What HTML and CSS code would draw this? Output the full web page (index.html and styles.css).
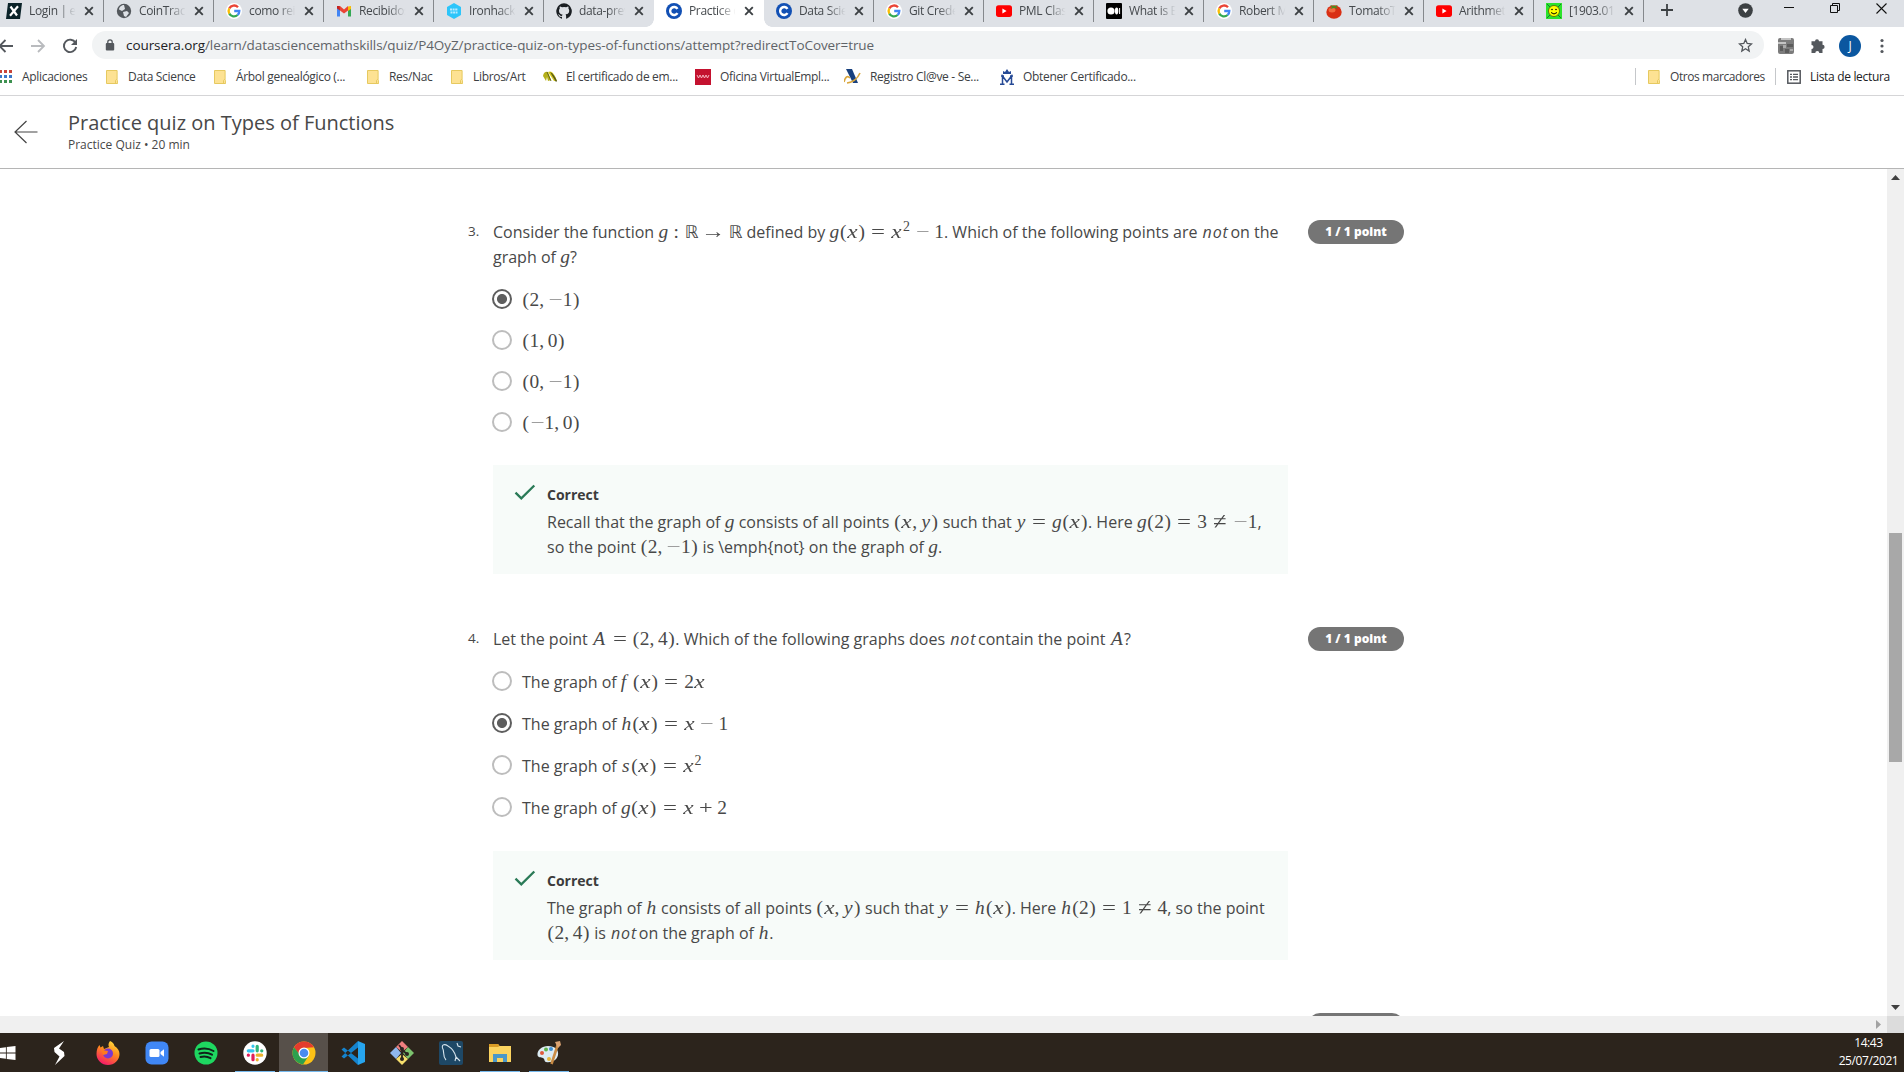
FILE: index.html
```html
<!DOCTYPE html>
<html lang="es">
<head>
<meta charset="utf-8">
<title>Practice quiz on Types of Functions</title>
<link rel="stylesheet" href="styles.css">
</head>
<body>
<svg class="defs" width="0" height="0">
<defs>
<symbol id="google" viewBox="0 0 16 16"><circle cx="8" cy="8" r="8" fill="#fff"/><g fill="none" stroke-width="2.3"><path d="M12 4.2A5.4 5.4 0 0 0 3.3 5.4" stroke="#ea4335"/><path d="M3.3 5.4A5.4 5.4 0 0 0 3.3 10.6" stroke="#fbbc05"/><path d="M3.3 10.6A5.4 5.4 0 0 0 11.6 12" stroke="#34a853"/><path d="M11.6 12A5.4 5.4 0 0 0 13.3 8H8.2" stroke="#4285f4"/></g></symbol>
<symbol id="coursera" viewBox="0 0 16 16"><circle cx="8" cy="8" r="8" fill="#1250b4"/><path d="M11.5 5.8A4 4 0 1 0 11.5 10.2" fill="none" stroke="#fff" stroke-width="2.4"/></symbol>
<symbol id="youtube" viewBox="0 0 16 16"><rect y="2.3" width="16" height="11.6" rx="2.6" fill="#f00"/><path d="M6.4 5.6v5l4.2-2.5z" fill="#fff"/></symbol>
<symbol id="close" viewBox="0 0 10 10"><path d="M1.2 1.2 8.8 8.8M8.8 1.2 1.2 8.8" stroke="#3c4043" stroke-width="1.9"/></symbol>
<symbol id="folder" viewBox="0 0 12 14"><path d="M.5.5h10.6v9l.5 1v3H.5z" fill="#fde293" stroke="#e6c95f"/><path d="M9.5 13.5v-3l1.2-1.3" fill="none" stroke="#e6c95f"/></symbol>
<symbol id="check" viewBox="0 0 22 17"><path d="M1.5 8.7 7.3 14.3 20.3 1.5" fill="none" stroke="#2a7a57" stroke-width="2.3"/></symbol>
</defs>
</svg>

<div class="tabs">
  <div class="tab"><svg class="fav" viewBox="0 0 16 16"><path d="M2 0h14l-2 16H0z" fill="#0b2329"/><path d="M4.5 3.5 11 12.5M12 3.3 4 12.7" stroke="#fff" stroke-width="2.2"/></svg><span class="name">Login | edX</span><svg class="x"><use href="#close"/></svg></div>
  <div class="tab"><svg class="fav" viewBox="0 0 16 16"><circle cx="8" cy="8" r="7.2" fill="#54585d"/><path d="M8 2C5 2 3 4.500 3 6.500l3 1.500 3-2zM7 9l4-1 2 2-3 4-2-1z" fill="#dee1e6"/></svg><span class="name">CoinTracker</span><svg class="x"><use href="#close"/></svg></div>
  <div class="tab"><svg class="fav"><use href="#google"/></svg><span class="name">como reinstalar</span><svg class="x"><use href="#close"/></svg></div>
  <div class="tab"><svg class="fav" viewBox="0 0 16 16"><path d="M1 3v10.500h3V6z" fill="#4285f4"/><path d="M12 6v7.500h3V3z" fill="#34a853"/><path d="M1 3.500 4 3l4 3.500L12 3v4.500L8 10.500 4 7.500z" fill="#ea4335"/><path d="M12 3.500 15 3v3l-3 2z" fill="#fbbc04"/><path d="M1 3h2.500L4 7.500 1 5.500z" fill="#c5221f"/></svg><span class="name">Recibidos (2)</span><svg class="x"><use href="#close"/></svg></div>
  <div class="tab"><svg class="fav" viewBox="0 0 16 16"><path d="M8 0l7 4v8l-7 4-7-4V4z" fill="#2dc5fa"/><path d="M4 6.500h8M4.500 9.500h7" stroke="#b8eaff" stroke-width="1.800" stroke-dasharray="2 .6"/></svg><span class="name">Ironhack Stu</span><svg class="x"><use href="#close"/></svg></div>
  <div class="tab last"><svg class="fav" viewBox="0 0 16 16"><path d="M8 .2a8 8 0 0 0-2.500 15.500c.4.100.5-.2.5-.4v-1.500c-2.200.5-2.700-.9-2.700-.9-.4-.9-.9-1.200-.9-1.200-.7-.5.100-.5.100-.5.800.100 1.200.8 1.200.8.700 1.300 1.900.9 2.400.7.100-.5.3-.9.5-1.100-1.800-.2-3.600-.9-3.600-4 0-.9.300-1.600.8-2.100-.100-.2-.4-1 .1-2.100 0 0 .700-.2 2.200.8a7.600 7.600 0 0 1 4 0c1.500-1 2.200-.8 2.200-.8.400 1.100.2 1.900.1 2.100.5.500.8 1.200.8 2.100 0 3.100-1.900 3.700-3.700 4 .3.300.6.800.6 1.500v2.200c0 .2.100.5.500.4A8 8 0 0 0 8 .2z" fill="#1b1f23"/></svg><span class="name">data-prework</span><svg class="x"><use href="#close"/></svg></div>
  <div class="tab active"><svg class="fav"><use href="#coursera"/></svg><span class="name">Practice quiz</span><svg class="x"><use href="#close"/></svg></div>
  <div class="tab"><svg class="fav"><use href="#coursera"/></svg><span class="name">Data Science</span><svg class="x"><use href="#close"/></svg></div>
  <div class="tab"><svg class="fav"><use href="#google"/></svg><span class="name">Git Credential</span><svg class="x"><use href="#close"/></svg></div>
  <div class="tab"><svg class="fav"><use href="#youtube"/></svg><span class="name">PML Class 1</span><svg class="x"><use href="#close"/></svg></div>
  <div class="tab"><svg class="fav" viewBox="0 0 16 16"><rect width="16" height="16" rx="1" fill="#000"/><circle cx="5" cy="8" r="3.600" fill="#fff"/><ellipse cx="10.600" cy="8" rx="1.700" ry="3.400" fill="#fff"/><path d="M13.600 5v6" stroke="#fff"/></svg><span class="name">What is Bayes</span><svg class="x"><use href="#close"/></svg></div>
  <div class="tab"><svg class="fav"><use href="#google"/></svg><span class="name">Robert Mill</span><svg class="x"><use href="#close"/></svg></div>
  <div class="tab"><svg class="fav" viewBox="0 0 16 16"><ellipse cx="8" cy="9" rx="7.700" ry="6.800" fill="#d92f14"/><ellipse cx="6" cy="7" rx="3.500" ry="2.500" fill="#f2693f"/><path d="M8 0v3l4-1-2 2 2 2-4-1-4 1 2-2-2-2 4 1z" fill="#4f8a1e"/></svg><span class="name">TomatoTimer</span><svg class="x"><use href="#close"/></svg></div>
  <div class="tab"><svg class="fav"><use href="#youtube"/></svg><span class="name">Arithmetic</span><svg class="x"><use href="#close"/></svg></div>
  <div class="tab"><svg class="fav" viewBox="0 0 16 16"><rect width="16" height="16" fill="#2be32b"/><path d="M1 1l14 14M15 1 1 15" stroke="#173" stroke-width="1"/><circle cx="8" cy="8" r="5.500" fill="#ff0" stroke="#550" stroke-width=".8"/><circle cx="6" cy="6.500" r=".8"/><circle cx="10" cy="6.500" r=".8"/><path d="M5 9.500q3 3 6 0" fill="none" stroke="#000"/></svg><span class="name">[1903.01 x</span><svg class="x"><use href="#close"/></svg></div>
  <svg class="plus" viewBox="0 0 12 12"><path d="M6 0v12M0 6h12" stroke="#3c4043" stroke-width="1.800"/></svg>
  <div class="winctl">
    <svg width="15" height="15" viewBox="0 0 15 15"><circle cx="7.500" cy="7.500" r="7.300" fill="#3c4043"/><path d="M4.300 5.700h6.400L7.500 10z" fill="#fff"/></svg>
    <svg width="10" height="10" viewBox="0 0 10 10"><path d="M0 4.500h10" stroke="#111"/></svg>
    <svg width="10" height="10" viewBox="0 0 10 10"><path d="M.5 2.500h7v7h-7zM2.500 2.500v-2h7v7h-2" fill="none" stroke="#111"/></svg>
    <svg width="11" height="11" viewBox="0 0 11 11"><path d="M.5.5l10 10M10.500.5l-10 10" stroke="#111" stroke-width="1.100"/></svg>
  </div>
</div>

<div class="toolbar">
  <svg class="nav" viewBox="0 0 16 16"><path d="M16 8H3M8.500 2 2.500 8l6 6" fill="none" stroke="#54585d" stroke-width="1.800"/></svg>
  <svg class="nav" viewBox="0 0 16 16"><path d="M1 8h13M8 2l6 6-6 6" fill="none" stroke="#b9bbbe" stroke-width="1.800"/></svg>
  <svg class="nav" viewBox="0 0 16 16"><path d="M13.500 4.800A6.200 6.200 0 1 0 14.200 9" fill="none" stroke="#54585d" stroke-width="1.900"/><path d="M15 1v6H9z" fill="#54585d"/></svg>
  <div class="omnibox">
    <svg width="10" height="12" viewBox="0 0 10 12"><rect x=".8" y="4" width="8.400" height="7.500" rx="1" fill="#54585d"/><path d="M2.800 5V3a2.200 2.200 0 0 1 4.400 0v2" fill="none" stroke="#54585d" stroke-width="1.300"/></svg>
    <span class="url"><b>coursera.org</b>/learn/datasciencemathskills/quiz/P4OyZ/practice-quiz-on-types-of-functions/attempt?redirectToCover=true</span>
    <svg width="15" height="15" viewBox="0 0 15 15"><path d="M7.500 1.500l1.700 4 4.300.4-3.200 2.900.9 4.300-3.700-2.300-3.700 2.300.9-4.300L1.500 5.900l4.300-.4z" fill="none" stroke="#54585d" stroke-width="1.300"/></svg>
  </div>
  <svg class="ext" width="16" height="16" viewBox="0 0 16 16"><rect width="16" height="16" rx="2" fill="#7c7c7c"/><path d="M3 0h10v2H3zM0 4h8v2H0z" fill="#c4c4c4"/><path d="M2 8h3v5H2zM9 6h6v3H9zM7 11h4v4H7z" fill="#5c5c5c"/><path d="M5 7h3v3H5zM12 11h3v2h-3z" fill="#aaa"/></svg>
  <svg class="puzzle" width="16" height="16" viewBox="0 0 16 16"><path d="M5 3.200a2 2 0 0 1 4 0h3.500v3.600a2 2 0 0 1 0 4.200V15H9.300a2 2 0 0 0-4 0H1.500v-4a2 2 0 0 0 0-4V3.200z" fill="#54585d"/></svg>
  <span class="avatar">J</span>
  <svg class="dots" width="4" height="16" viewBox="0 0 4 16"><g fill="#54585d"><circle cx="2" cy="2.500" r="1.600"/><circle cx="2" cy="8" r="1.600"/><circle cx="2" cy="13.500" r="1.600"/></g></svg>
</div>

<div class="bookmarks">
  <div class="marks">
    <span class="bm apps"><svg width="12" height="13" viewBox="0 0 12 13"><path d="M-1 1.500h13" stroke="#c9453a" stroke-width="3" stroke-dasharray="3 2"/><path d="M-1 6.500h13" stroke="#3c78c8" stroke-width="3" stroke-dasharray="3 2"/><path d="M-1 11.500h13" stroke="#3d9150" stroke-width="3" stroke-dasharray="3 2"/></svg>Aplicaciones</span>
    <span class="bm"><svg class="fold"><use href="#folder"/></svg>Data Science</span>
    <span class="bm"><svg class="fold"><use href="#folder"/></svg>Árbol genealógico (...</span>
    <span class="bm"><svg class="fold"><use href="#folder"/></svg>Res/Nac</span>
    <span class="bm"><svg class="fold"><use href="#folder"/></svg>Libros/Art</span>
    <span class="bm"><svg width="14" height="11" viewBox="0 0 14 11"><path d="M0 5Q1 0 5 1l3 8-3 1-1-4-1 4z" fill="#b5b01a"/><path d="M5 1q5-3 9 9l-3 0z" fill="#d4c81c"/><path d="M7 1q4 2 7 9l-1 1z" fill="#55581a"/><path d="M4 1l4 9" stroke="#66691a" fill="none"/></svg>El certificado de em...</span>
    <span class="bm"><svg width="16" height="16" viewBox="0 0 16 16"><rect width="16" height="16" fill="#c4122f"/><path d="M2 6l1.500 3L5 6l1.500 3L8 6l1.500 3L11 6l1.500 3L14 6" fill="none" stroke="#f5b5c0"/></svg>Oficina VirtualEmpl...</span>
    <span class="bm"><svg width="17" height="15" viewBox="0 0 17 15"><path d="M2 0h6l6 14H9z" fill="#17407e"/><path d="M0 13Q2 5 6 9M3 14Q12 13 16 4" fill="none" stroke="#d9a63c" stroke-width="1.600"/></svg>Registro Cl@ve - Se...</span>
    <span class="bm"><svg width="14" height="16" viewBox="0 0 14 16"><path d="M3 5V2l2 1 2-3 2 3 2-1v3z" fill="#264a96"/><path d="M2.500 15V7L7 13l4.500-6v8M0 15.300h4.500M9.500 15.300H14M1 7h3M10 7h3" fill="none" stroke="#264a96" stroke-width="1.500"/></svg>Obtener Certificado...</span>
  </div>
  <div class="others">
    <span class="bm edge"><svg class="fold"><use href="#folder"/></svg>Otros marcadores</span>
    <span class="bm edge list"><svg width="14" height="14" viewBox="0 0 14 14"><rect x=".8" y=".8" width="12.400" height="12.400" fill="none" stroke="#54585d" stroke-width="1.500"/><path d="M3 4.300h2M3 7h2M3 9.700h2M6 4.300h5M6 7h5M6 9.700h5" stroke="#54585d" stroke-width="1.300"/></svg>Lista de lectura</span>
  </div>
</div>

<header class="quizbar">
  <svg width="24" height="24" viewBox="0 0 24 24"><path d="M23.500 12H1M12.500 1 1 12l11.500 11" fill="none" stroke="#444" stroke-width="1.200"/></svg>
  <div><h1>Practice quiz on Types of Functions</h1><p>Practice Quiz • 20 min</p></div>
</header>

<div class="view">
  <main class="page">
    <section class="question">
      <span class="num">3.</span>
      <div class="body">
        <p class="prompt">Consider the function <span class="m"><i class="g">g</i><span class="r">:</span><span class="bb">ℝ</span><span class="r ar">→</span><span class="bb">ℝ</span></span> defined by <span class="m"><i class="g">g</i><u>(</u><i class="v">x</i><u>)</u><span class="r eq">=</span><i class="v">x</i><sup>2</sup><span class="b mi">−</span><s>1</s></span>. Which of the following points are <em>not</em> on the<br>graph of <span class="m"><i class="g">g</i></span>?</p>
        <ul class="options pairs">
          <li><span class="radio on"></span><span class="m"><u>(</u><s>2</s><span class="c">,</span><span class="n">−</span><s>1</s><u>)</u></span></li>
          <li><span class="radio"></span><span class="m"><u>(</u><s>1</s><span class="c">,</span><s>0</s><u>)</u></span></li>
          <li><span class="radio"></span><span class="m"><u>(</u><s>0</s><span class="c">,</span><span class="n">−</span><s>1</s><u>)</u></span></li>
          <li><span class="radio"></span><span class="m"><u>(</u><span class="n">−</span><s>1</s><span class="c">,</span><s>0</s><u>)</u></span></li>
        </ul>
        <div class="feedback">
          <svg width="22" height="17"><use href="#check"/></svg>
          <div><h2>Correct</h2><p>Recall that the graph of <span class="m"><i class="g">g</i></span> consists of all points <span class="m"><u>(</u><i class="v">x</i><span class="c">,</span><i class="y">y</i><u>)</u></span> such that <span class="m"><i class="y">y</i><span class="r eq">=</span><i class="g">g</i><u>(</u><i class="v">x</i><u>)</u></span>. Here <span class="m"><i class="g">g</i><u>(</u><s>2</s><u>)</u><span class="r eq">=</span><s>3</s><span class="r eq ne">≠</span><span class="n">−</span><s>1</s></span>,<br>so the point <span class="m"><u>(</u><s>2</s><span class="c">,</span><span class="n">−</span><s>1</s><u>)</u></span> is \emph{not} on the graph of <span class="m"><i class="g">g</i></span>.</p></div>
        </div>
      </div>
      <span class="pill">1 / 1 point</span>
    </section>

    <section class="question">
      <span class="num">4.</span>
      <div class="body">
        <p class="prompt">Let the point <span class="m"><i class="a">A</i><span class="r eq">=</span><u>(</u><s>2</s><span class="c">,</span><s>4</s><u>)</u></span>. Which of the following graphs does <em>not</em> contain the point <span class="m"><i class="a">A</i></span>?</p>
        <ul class="options">
          <li><span class="radio"></span><span>The graph of <span class="m"><i class="f">f</i><u>(</u><i class="v">x</i><u>)</u><span class="r eq">=</span><s>2</s><i class="v">x</i></span></span></li>
          <li><span class="radio on"></span><span>The graph of <span class="m"><i class="h">h</i><u>(</u><i class="v">x</i><u>)</u><span class="r eq">=</span><i class="v">x</i><span class="b mi">−</span><s>1</s></span></span></li>
          <li><span class="radio"></span><span>The graph of <span class="m"><i class="g">s</i><u>(</u><i class="v">x</i><u>)</u><span class="r eq">=</span><i class="v">x</i><sup>2</sup></span></span></li>
          <li><span class="radio"></span><span>The graph of <span class="m"><i class="g">g</i><u>(</u><i class="v">x</i><u>)</u><span class="r eq">=</span><i class="v">x</i><span class="b">+</span><s>2</s></span></span></li>
        </ul>
        <div class="feedback">
          <svg width="22" height="17"><use href="#check"/></svg>
          <div><h2>Correct</h2><p>The graph of <span class="m"><i class="h">h</i></span> consists of all points <span class="m"><u>(</u><i class="v">x</i><span class="c">,</span><i class="y">y</i><u>)</u></span> such that <span class="m"><i class="y">y</i><span class="r eq">=</span><i class="h">h</i><u>(</u><i class="v">x</i><u>)</u></span>. Here <span class="m"><i class="h">h</i><u>(</u><s>2</s><u>)</u><span class="r eq">=</span><s>1</s><span class="r eq ne">≠</span><s>4</s></span>, so the point<br><span class="m"><u>(</u><s>2</s><span class="c">,</span><s>4</s><u>)</u></span> is <em>not</em> on the graph of <span class="m"><i class="h">h</i></span>.</p></div>
        </div>
      </div>
      <span class="pill">1 / 1 point</span>
    </section>

    <section class="question"><span class="num"></span><div class="body"></div><span class="pill"></span></section>
  </main>
  <div class="vbar"><svg width="9" height="5" viewBox="0 0 9 5"><path d="M0 5 4.500 0 9 5z" fill="#404040"/></svg><span class="thumb"></span><svg width="9" height="5" viewBox="0 0 9 5"><path d="M0 0h9L4.500 5z" fill="#404040"/></svg></div>
</div>
<div class="hbar"><svg width="5" height="9" viewBox="0 0 5 9"><path d="M0 0v9l5-4.500z" fill="#a3a3a3"/></svg><span class="corner"></span></div>

<footer class="taskbar">
  <div class="task win"><svg viewBox="0 0 24 24"><path d="M0 6.500 9.500 5v6.500H0zM10.500 4.900 21 3.500v8H10.500zM0 12.500h9.500V19L0 17.500zM10.500 12.500H21v8l-10.500-1.400z" fill="#fff"/></svg></div>
  <div class="task"><svg viewBox="0 0 24 24"><path d="M17 0 7 7l.5 4 5 4.500L8 24l9.500-9-.5-4-5-3.500z" fill="#fff"/></svg></div>
  <div class="task"><svg viewBox="0 0 24 24"><defs><linearGradient id="fx" x1=".8" y1="0" x2=".3" y2="1"><stop offset="0" stop-color="#ffe23f"/><stop offset=".45" stop-color="#ff8a1d"/><stop offset="1" stop-color="#f5156c"/></linearGradient></defs><path d="M14 0c3 1 4 3 4.500 5C22 7 23.500 10 23.500 13a11.500 11 0 0 1-23 0C.5 9 1.500 6 3.500 4l1 2.500L7 5l1 3 5-2c-1-2-.5-4 1-6z" fill="url(#fx)"/><circle cx="12" cy="12.500" r="5" fill="#7a38d0"/><path d="M6 9l6 1-1 3-4 1z" fill="#ff7a1d"/></svg></div>
  <div class="task"><svg viewBox="0 0 24 24"><rect x=".5" y=".5" width="23" height="23" rx="6" fill="#4087f5"/><rect x="4.500" y="8" width="10" height="8" rx="1.500" fill="#fff"/><path d="M15.500 11 19 8.300v7.400L15.500 13z" fill="#fff"/></svg></div>
  <div class="task"><svg viewBox="0 0 24 24"><circle cx="12" cy="12" r="11.500" fill="#1ed760"/><path d="M4.500 8.500q8-2.500 15 1.500M5.500 12.500q7-2 12.500 1.200M6.500 16q5.500-1.500 10 1.200" fill="none" stroke="#10221a" stroke-width="2" stroke-linecap="round"/></svg></div>
  <div class="task open"><svg viewBox="0 0 24 24"><circle cx="12" cy="12" r="11.700" fill="#fff"/><g fill="none" stroke-width="3.200" stroke-linecap="round"><path d="M10 9.800H5.300M10 5.200v.1" stroke="#36c5f0"/><path d="M14.200 9.800V5.300M18.700 9.800h.1" stroke="#2eb67d"/><path d="M14.200 14.200h4.500M14.200 18.700v.1" stroke="#ecb22e"/><path d="M10 14.200v4.500M5.300 14.200h.1" stroke="#e01e5a"/></g></svg></div>
  <div class="task open current"><svg viewBox="0 0 24 24"><circle cx="12" cy="12" r="11.500" fill="#fbc116"/><path d="M2 6.300A11.500 11.500 0 0 1 22 6.300L12 7 8 15z" fill="#e33b2e"/><path d="M2 6.300A11.500 11.500 0 0 0 11 23.500L16.500 15 8 14z" fill="#2da04e"/><circle cx="12" cy="12" r="5.500" fill="#fff"/><circle cx="12" cy="12" r="4.300" fill="#4a8bf0"/></svg></div>
  <div class="task"><svg viewBox="0 0 24 24"><path d="M17 0 24 3v18l-7 3z" fill="#27a5ee"/><path d="M17 0v6.500L3 17.500.5 15.500zM17 24v-6.500L3 6.500.5 8.500z" fill="#1583cd"/></svg></div>
  <div class="task"><svg viewBox="0 0 24 24"><path d="M12 0l6 6-6 5-6-5z" fill="#ef7f7f"/><path d="M6 6l5 6-5 6-6-6z" fill="#8fb8ee"/><path d="M18 6l6 6-6 6-5-6z" fill="#7cc36e"/><path d="M12 13l6 5-6 6-6-6z" fill="#f6de6c"/><path d="M9 4l3 4v11M12 9l5 4" fill="none" stroke="#2a2320" stroke-width="1.800"/><circle cx="12" cy="8" r="2" fill="#2a2320"/><circle cx="17" cy="13" r="2" fill="#2a2320"/><circle cx="12" cy="18" r="2" fill="#2a2320"/></svg></div>
  <div class="task"><svg viewBox="0 0 24 24"><rect width="24" height="24" rx="2" fill="#1e4866"/><path d="M7 19C3 15 6 11 3.500 7 2.500 3 6 3 9 5c5 3 7 7 8 11l4 4M17 16l-1 4M18 2l1 3 3 1" fill="none" stroke="#d5e3ec" stroke-width="1.100"/></svg></div>
  <div class="task open"><svg viewBox="0 0 24 24"><path d="M1 3h9l1.500 2H23v16H1z" fill="#fbd35f"/><path d="M1 3h9l1.500 2L10 6H1z" fill="#d99c26"/><path d="M5 21v-8h14v8h-4v-4H9v4z" fill="#4b98c9"/></svg></div>
  <div class="task open"><svg viewBox="0 0 24 24"><path d="M11 5c7 0 11 4 10 9s-6 8-12 7c-2-.5-1-3-3-4s-5 0-5.500-3C0 9 5 5 11 5z" fill="#dcebf2"/><circle cx="5" cy="12" r="2" fill="#e05a3c"/><circle cx="9" cy="8.500" r="2" fill="#5fb34b"/><circle cx="14" cy="8" r="2" fill="#3f8fd2"/><circle cx="12" cy="18" r="2" fill="#e8b93a"/><path d="M21 3 14.500 23" stroke="#c98b45" stroke-width="2.600"/><path d="M18 1l5-1 1 4-3 3z" fill="#d9a272"/></svg></div>
  <div class="clock"><span>14:43</span><span>25/07/2021</span></div>
</footer>
</body>
</html>
```
FILE: styles.css
```css
* { box-sizing: border-box; }
body { margin: 0; width: 1904px; height: 1072px; overflow: hidden; display: flex; flex-direction: column; background: #fff; color: #484848; font-family: "Open Sans", "Noto Sans", sans-serif; }
h1, h2, p, ul { margin: 0; padding: 0; font-weight: 400; }
svg { display: block; flex: none; }
.defs { position: absolute; }

/* tab strip */
.tabs { height: 27px; display: flex; flex: none; background: #dee1e6; overflow: hidden; }
.tab { width: 110px; height: 27px; flex: none; display: flex; align-items: center; padding: 0 6px 6px 12px; border-right: 1px solid #85888c; border-image: linear-gradient(#85888c 0 21px, transparent 21px) 1; }
.tab:first-child { margin-left: -6px; }
.tab.last, .tab.active { border-color: transparent; border-image: none; }
.tab.active { position: relative; background: #fff; border: 0; }
.tab.active::before, .tab.active::after { content: ""; position: absolute; bottom: 0; width: 8px; height: 8px; }
.tab.active::before { right: 100%; background: radial-gradient(circle at 0 0, transparent 7.500px, #fff 8px); }
.tab.active::after { left: 100%; background: radial-gradient(circle at 100% 0, transparent 7.500px, #fff 8px); }
.fav { width: 16px; height: 16px; }
.name { width: 48px; margin: 0 7px 0 7px; overflow: hidden; white-space: nowrap; font-size: 12px; letter-spacing: -.35px; line-height: 18px; color: #45494d; -webkit-mask-image: linear-gradient(90deg, #000 60%, transparent 97%); mask-image: linear-gradient(90deg, #000 60%, transparent 97%); }
.x { width: 10px; height: 10px; }
.plus { width: 12px; height: 12px; margin: 4px 0 0 17px; }
.winctl { margin-left: auto; display: flex; padding: 3px 17px 0 0; gap: 36px; }
.winctl svg:first-child { margin-right: -5px; }

/* address bar */
.toolbar { height: 37px; flex: none; display: flex; align-items: center; background: #fff; }
.nav { width: 16px; height: 16px; margin-right: 16px; }
.nav:first-child { margin-left: -3px; margin-right: 17px; }
.nav:nth-child(3) { margin-right: 14px; }
.omnibox { width: 1672px; height: 28px; margin-top: -1px; border-radius: 14px; background: #f1f3f4; display: flex; align-items: center; padding: 0 11px 0 13px; }
.url { flex: 1; margin-left: 11px; font-size: 13.500px; letter-spacing: -.08px; color: #5f6368; white-space: nowrap; }
.url b { font-weight: 400; color: #202124; }
.ext { margin-left: 14px; }
.puzzle { margin-left: 16px; }
.avatar { width: 22px; height: 22px; margin-left: 13px; border-radius: 50%; background: #0b57a0; color: #fff; font-size: 12px; line-height: 22px; text-align: center; }
.dots { margin-left: 19px; }

/* bookmarks bar */
.bookmarks { height: 32px; flex: none; display: flex; justify-content: space-between; padding-bottom: 6px; border-bottom: 1px solid #d5d5d7; font-size: 12px; letter-spacing: -.32px; color: #3c4043; }
.marks { display: grid; grid-template-columns: 106px 108px 153px 84px 92px 152px 149px 156px 160px; }
.bm { display: flex; align-items: center; gap: 9px; white-space: nowrap; }
.apps { gap: 10px; }
.fold { width: 12px; height: 14px; margin-right: 1px; }
.others { display: flex; align-items: center; }
.edge { height: 17px; border-left: 1px solid #c5c7ca; padding-left: 12px; width: 140px; letter-spacing: -.42px; }
.list { width: 129px; padding-left: 11px; color: #202124; letter-spacing: -.32px; }

/* quiz title */
.quizbar { height: 73px; flex: none; display: flex; align-items: center; gap: 30px; padding-left: 14px; border-bottom: 1px solid #b5b5b5; }
.quizbar h1 { font-size: 20px; line-height: 26px; }
.quizbar p { font-size: 12px; line-height: 18px; }

/* scrolling area */
.view { flex: none; height: 847px; display: flex; }
.page { flex: 1; padding: 50px 0 0 467px; overflow: hidden; }
.question { display: flex; align-items: flex-start; height: 407px; }
.question + .question { height: 386px; }
.num { width: 26px; padding-left: 1px; font-size: 13.500px; line-height: 25px; }
.body { width: 795px; margin-right: 20px; font-size: 16px; line-height: 25px; white-space: nowrap; }
.body em { margin: 0 -2.500px 0 1px; letter-spacing: .9px; }
.prompt { padding-top: 1px; }
.pill { width: 96px; height: 24px; margin-top: 1px; border-radius: 12px; background: #757575; color: #fff; font-size: 12px; font-weight: 800; line-height: 24px; text-align: center; }
.options { list-style: none; margin: 8px 0 23px -1px; }
.options li { height: 42px; display: flex; align-items: center; gap: 10px; }
.options li > :last-child { padding-top: 2px; }
.pairs { margin-bottom: 23px; }
.pairs li { height: 41px; }
.radio { width: 20px; height: 20px; border: 2px solid #bdbdbd; border-radius: 50%; }
.radio.on { border-color: #5e5e5e; background: radial-gradient(circle, #5e5e5e 4.600px, #fff 5.400px); }
.feedback { height: 109px; background: #f7fbf9; display: flex; gap: 11px; padding: 19px 0 0 21px; }
.feedback h2 { font-size: 14px; font-weight: 700; line-height: 22px; color: #3c3c3c; }
.feedback p { margin-top: 4px; }

/* formulas */
.m { font-family: "Liberation Serif", serif; font-size: 19.360px; line-height: 1; white-space: nowrap; }
.m * { display: inline-block; text-align: center; line-height: 1; text-decoration: none; }
.m s { width: .5em; }
.m u { width: .389em; }
.m .g { width: .513em; }
.m .y { width: .526em; }
.m .h { width: .576em; }
.m .f { width: .598em; text-align: left; }
.m .a { width: .75em; }
.m .v { width: .572em; transform: scaleX(1.200); }
.m .c { width: .445em; text-align: left; }
.m .n { width: .778em; color: #9a9a9a; transform: scaleX(1.300); }
.m .r { width: 1.334em; }
.m .g + .r:nth-child(2) { width: .834em; }
.m .g + .r.eq { width: 1.334em; }
.m .eq { transform: scaleX(1.280); }
.m .ne { transform: scale(1.280, 1.200); }
.m .r.ar { width: 1.556em; transform: scaleX(1.250); }
.m .b { width: 1.222em; transform: scaleX(1.250); }
.m .mi { color: #9a9a9a; }
.m .bb { width: .8em; font-family: "DejaVu Sans", sans-serif; font-size: .9em; }
.m sup { width: .6em; font-size: .72em; vertical-align: .5em; }

/* scrollbars */
.vbar { width: 17px; background: #f0f0f0; display: flex; flex-direction: column; align-items: center; padding: 6px 0; }
.thumb { width: 13px; height: 229px; margin: 353px 0 auto; background: #a8a8a8; }
.hbar { height: 17px; flex: none; background: #f0f0f0; display: flex; justify-content: flex-end; align-items: center; gap: 6px; }
.corner { width: 17px; height: 17px; background: #dcdcdc; }

/* taskbar */
.taskbar { height: 39px; flex: none; display: flex; background: #2c241c; }
.task { width: 49px; height: 39px; flex: none; display: flex; align-items: center; justify-content: center; padding-top: 1px; }
.task svg { width: 24px; height: 24px; }
.task.win { width: 34px; justify-content: flex-start; }
.task.win svg { width: 20px; height: 20px; margin-left: -2px; }
.task.open { background: linear-gradient(#76b9ed, #76b9ed) center bottom / 40px 1px no-repeat; }
.task.current { background: linear-gradient(#76b9ed, #76b9ed) center bottom / 49px 1px no-repeat #57504a; }
.clock { margin-left: auto; width: 71px; display: flex; flex-direction: column; align-items: center; color: #fff; font-size: 12px; line-height: 18px; letter-spacing: -.4px; padding-top: 1px; }
```
